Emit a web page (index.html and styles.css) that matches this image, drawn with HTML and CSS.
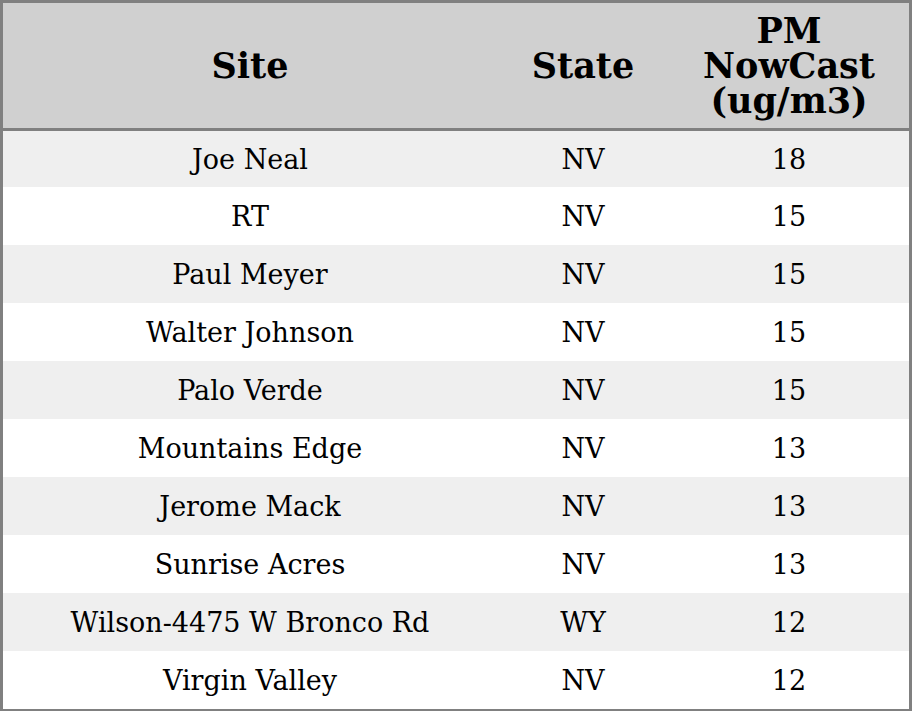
FILE: index.html
```html
<!DOCTYPE html>
<html>
<head>
<meta charset="utf-8">
<link rel="stylesheet" href="styles.css">
</head>
<body>
<table class="aq">
  <thead>
    <tr>
      <th class="c-site">Site</th>
      <th class="c-state">State</th>
      <th class="c-pm">PM<br>NowCast<br>(ug/m3)</th>
    </tr>
  </thead>
  <tbody>
    <tr class="first"><td>Joe Neal</td><td>NV</td><td>18</td></tr>
    <tr><td>RT</td><td>NV</td><td>15</td></tr>
    <tr><td>Paul Meyer</td><td>NV</td><td>15</td></tr>
    <tr><td>Walter Johnson</td><td>NV</td><td>15</td></tr>
    <tr><td>Palo Verde</td><td>NV</td><td>15</td></tr>
    <tr><td>Mountains Edge</td><td>NV</td><td>13</td></tr>
    <tr><td>Jerome Mack</td><td>NV</td><td>13</td></tr>
    <tr><td>Sunrise Acres</td><td>NV</td><td>13</td></tr>
    <tr><td>Wilson-4475 W Bronco Rd</td><td>WY</td><td>12</td></tr>
    <tr><td>Virgin Valley</td><td>NV</td><td>12</td></tr>
  </tbody>
</table>
</body>
</html>
```
FILE: styles.css
```css
html, body {
  margin: 0;
  padding: 0;
  background: #ffffff;
}
.aq {
  width: 912px;
  height: 711px;
  border-collapse: collapse;
  border: 3px solid #808080;
  font-family: "DejaVu Serif", serif;
  color: #000;
  table-layout: fixed;
}
.aq th {
  background: #d0d0d0;
  font-weight: bold;
  font-size: 35px;
  line-height: 35px;
  height: 125px;
  padding: 0;
  text-align: center;
  vertical-align: middle;
  border-bottom: 3px solid #808080;
}
.c-site { width: 494px; }
.c-state { width: 172px; }
.c-pm { width: 240px; }
.aq td {
  font-size: 27px;
  text-align: center;
  vertical-align: middle;
  padding: 0;
  height: 58px;
}
.aq tbody tr.first td {
  height: 56px;
}
.aq tbody tr:nth-child(odd) td {
  background: #efefef;
}
```
